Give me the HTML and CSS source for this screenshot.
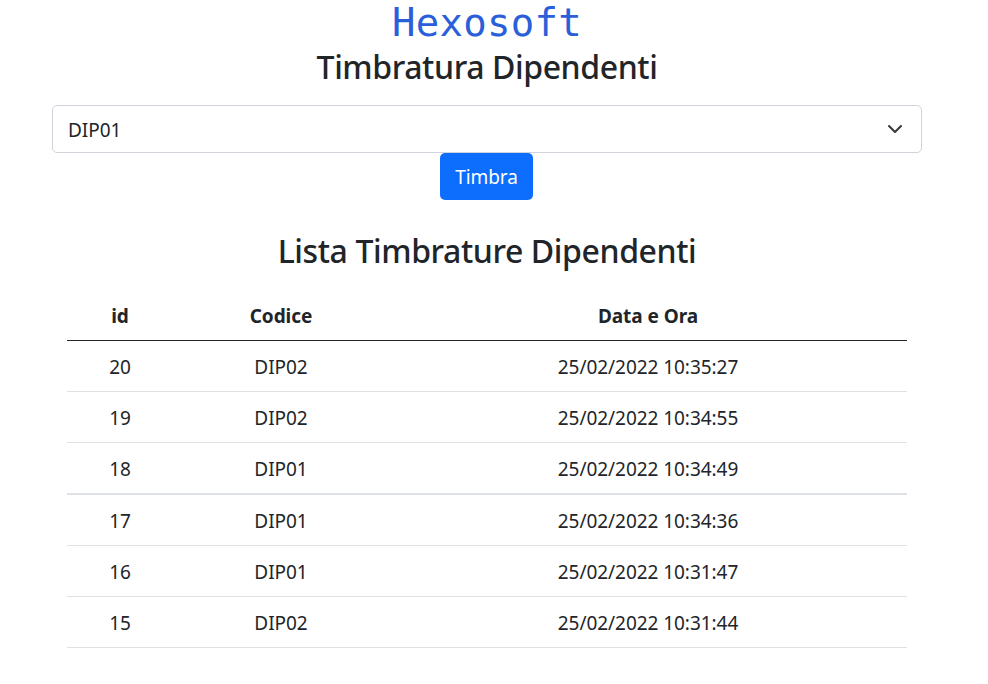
FILE: index.html
```html
<!DOCTYPE html>
<html lang="it">
<head>
<meta charset="utf-8">
<title>Timbratura Dipendenti</title>
<link rel="stylesheet" href="styles.css">
</head>
<body>
<main class="container">
  <div class="brand">Hexosoft</div>
  <h1 class="title">Timbratura Dipendenti</h1>
  <div class="select"><span>DIP01</span>
    <svg class="chevron" viewBox="0 0 16 16"><path d="M2 5l6 6 6-6" fill="none" stroke="#343a40" stroke-width="2" stroke-linecap="round" stroke-linejoin="round"/></svg>
  </div>
  <button class="btn" type="button">Timbra</button>
  <h2 class="title list-title">Lista Timbrature Dipendenti</h2>
  <table class="table">
    <colgroup><col class="col-id"><col class="col-code"><col class="col-date"></colgroup>
    <thead><tr><th>id</th><th>Codice</th><th>Data e Ora</th></tr></thead>
    <tbody>
      <tr><td>20</td><td>DIP02</td><td>25/02/2022 10:35:27</td></tr>
      <tr><td>19</td><td>DIP02</td><td>25/02/2022 10:34:55</td></tr>
      <tr class="group-end"><td>18</td><td>DIP01</td><td>25/02/2022 10:34:49</td></tr>
      <tr><td>17</td><td>DIP01</td><td>25/02/2022 10:34:36</td></tr>
      <tr><td>16</td><td>DIP01</td><td>25/02/2022 10:31:47</td></tr>
      <tr><td>15</td><td>DIP02</td><td>25/02/2022 10:31:44</td></tr>
    </tbody>
  </table>
</main>
</body>
</html>
```
FILE: styles.css
```css
* { box-sizing: border-box; }
body { margin: 0; background: #fff; color: #212529; font-family: "Noto Sans", sans-serif; font-size: 19px; font-weight: 370; line-height: 27px; letter-spacing: -0.05px; }
.container { width: 870px; margin-left: 52px; display: flex; flex-direction: column; align-items: center; }
.brand { height: 45px; color: #2b5fd9; font-family: "DejaVu Sans Mono", monospace; font-size: 39px; line-height: 45px; letter-spacing: 0.3px; }
.title { margin: 0; height: 60px; font-size: 32px; line-height: 44px; font-weight: 500; letter-spacing: -0.4px; }
.select { width: 870px; height: 48px; padding: 2px 17px 0 15px; border: 1px solid #ced4da; border-radius: 5px; display: flex; align-items: center; justify-content: space-between; }
.chevron { width: 16px; height: 16px; margin: -2px 1px 0 0; }
.btn { height: 47px; width: 93px; margin-right: 1px; padding: 2px 0 0; border: 0; border-radius: 5px; background: #0d6efd; color: #fff; font: inherit; letter-spacing: inherit; }
.list-title { margin-top: 28px; height: 62px; line-height: 46px; }
.table { width: 840px; border-collapse: separate; border-spacing: 0; table-layout: fixed; text-align: center; }
.col-id { width: 106px; }
.col-code { width: 216px; }
.table th { height: 51px; padding: 2px 0 0; font-weight: 700; border-bottom: 1px solid #212529; }
.table td { height: 51px; padding: 2px 0 0; border-bottom: 1px solid #dee2e6; }
.table .group-end td { height: 52px; border-bottom-width: 2px; }
```
